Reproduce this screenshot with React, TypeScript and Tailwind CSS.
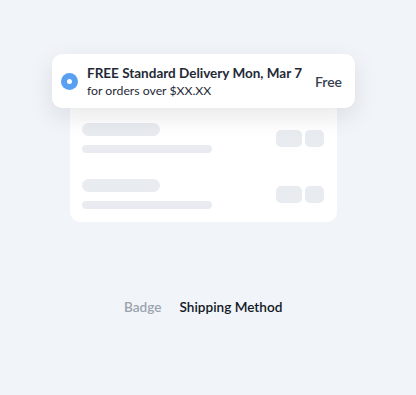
import React from "react";

export default function App() {
  return (
    <div className="w-[416px] h-[395px] bg-[#f1f4f8] flex flex-col" style={{ fontFamily: "Lato, 'Noto Sans', sans-serif" }}>
      <div className="relative w-[416px] h-[240px]">
        <div className="absolute left-[70px] top-[100px] w-[267px] h-[122px] bg-white rounded-[10px] pl-[12px] pr-[13px] pt-[23px] flex flex-col gap-[26px]">
          {[0, 1].map((i) => (
            <div key={i} className="flex items-center justify-between">
              <div className="flex flex-col gap-[9px]">
                <div className="w-[78px] h-[13px] rounded-full bg-[#e8ebf0]" />
                <div className="w-[130px] h-[8px] rounded-full bg-[#e8ebf0]" />
              </div>
              <div className="flex gap-[3px]">
                <div className="w-[26px] h-[17px] rounded-[5px] bg-[#e8ebf0]" />
                <div className="w-[19px] h-[17px] rounded-[5px] bg-[#e8ebf0]" />
              </div>
            </div>
          ))}
        </div>
        <div className="absolute left-[52px] top-[54px] w-[303px] h-[54px] bg-white rounded-[10px] shadow-[0_8px_24px_rgba(15,23,42,0.10)] flex items-center pl-[9px] pr-[13px]">
          <div className="w-[17px] h-[17px] rounded-full bg-[#5aa0f2] flex items-center justify-center shrink-0">
            <div className="w-[5px] h-[5px] rounded-full bg-white" />
          </div>
          <div className="ml-[9px] flex flex-col flex-1">
            <div className="text-[13.5px] leading-[18px] font-bold text-[#1f2937]">FREE Standard Delivery Mon, Mar 7</div>
            <div className="text-[12.25px] leading-[17px] text-[#1f2937]">for orders over $XX.XX</div>
          </div>
          <div className="text-[14px] font-semibold text-[#374151]">Free</div>
        </div>
      </div>
      <div className="mt-[58px] pl-[124px] flex gap-[18px] text-[13.6px] font-semibold leading-[18px]">
        <span className="text-[#9ca3af]">Badge</span>
        <span className="text-[#111827]">Shipping Method</span>
      </div>
    </div>
  );
}
